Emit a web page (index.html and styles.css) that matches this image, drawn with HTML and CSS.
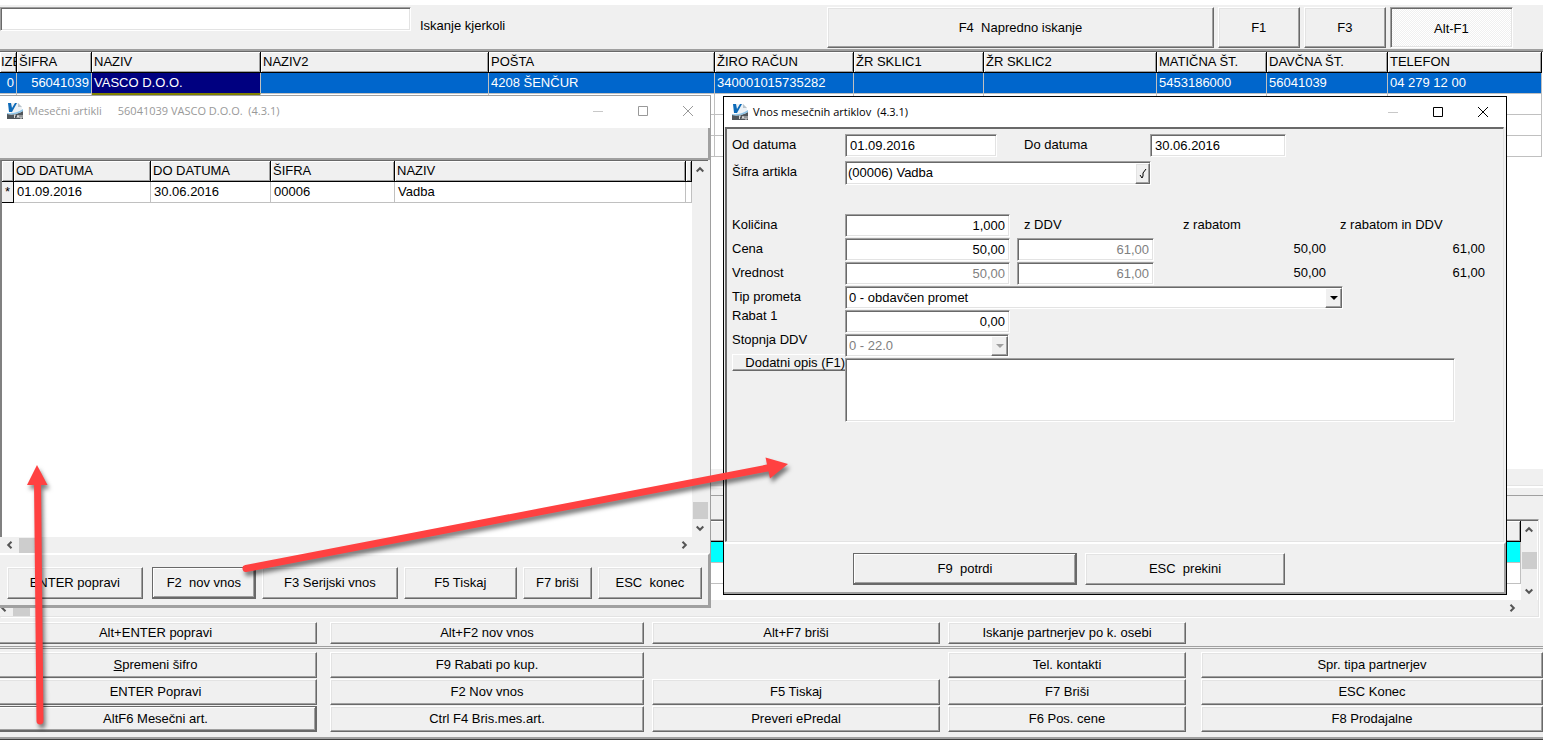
FILE: index.html
```
<!DOCTYPE html>
<html lang="sl">
  <head>
    <meta charset="UTF-8" />
    <meta name="viewport" content="width=device-width, initial-scale=1.0" />
    <title>Partnerji</title>
    <link rel="stylesheet" href="styles.css">
  </head>
  <body>
    <!-- shared icons -->
    <svg class="defs" width="0" height="0" aria-hidden="true">
      <symbol id="logo" viewBox="0 0 16 16">
        <path d="M4 0h7l4 4v8H4z" fill="#edf2f6" />
        <path d="M11 0l4 4h-4z" fill="#b9c3ca" />
        <path d="M0 11c6 1 11 0 16-3v8H0z" fill="#50565b" />
        <path d="M0 10c5 1 10 0 16-4v2c-5 3-10 4-16 3z" fill="#8cc3e6" />
        <path d="M1 0h3l1 5 3-5h2L5 9H2z" fill="#0d6ab8" />
        <path d="M7 12h2M7.500 12v3M10 15l1-3 1 3M13 12v3h2v-3" fill="none" stroke="#d8d8d8" />
      </symbol>
      <symbol id="min" viewBox="0 0 10 10"><path d="M0 5.500h10" fill="none" stroke="#c8c8c8" /></symbol>
      <symbol id="max" viewBox="0 0 10 10"><path d="M.5.5h9v9h-9z" fill="none" stroke="currentColor" /></symbol>
      <symbol id="close" viewBox="0 0 10 10"><path d="M0 0l10 10M10 0L0 10" fill="none" stroke="currentColor" /></symbol>
      <symbol id="up" viewBox="0 0 8 8"><path d="M.7 5.500L4 2.200l3.300 3.300" fill="none" stroke="#555" stroke-width="2" /></symbol>
      <symbol id="down" viewBox="0 0 8 8"><path d="M.7 2.500L4 5.800l3.300-3.300" fill="none" stroke="#555" stroke-width="2" /></symbol>
      <symbol id="left" viewBox="0 0 8 8"><path d="M5.500.7L2.200 4l3.300 3.300" fill="none" stroke="#555" stroke-width="2" /></symbol>
      <symbol id="right" viewBox="0 0 8 8"><path d="M2.500.7L5.800 4 2.500 7.300" fill="none" stroke="#555" stroke-width="2" /></symbol>
    </svg>

    <div class="toolbar">
      <input type="text" id="search" class="search" />
      <label for="search">Iskanje kjerkoli</label>
      <div class="toolbar-buttons">
        <button type="button" class="btn wide">F4  Napredno iskanje</button>
        <button type="button" class="btn">F1</button>
        <button type="button" class="btn">F3</button>
        <button type="button" class="btn pressed">Alt-F1</button>
      </div>
    </div>

    <div class="main-grid">
      <table class="grid partners">
        <colgroup>
          <col class="w-ize"><col class="w-sifra"><col class="w-naziv"><col class="w-naziv2"><col class="w-posta"><col class="w-racun"><col class="w-sklic1"><col class="w-sklic2"><col class="w-maticna"><col class="w-davcna"><col>
        </colgroup>
        <thead>
          <tr>
            <th class="cut">IZE</th>
            <th>ŠIFRA</th>
            <th>NAZIV</th>
            <th>NAZIV2</th>
            <th>POŠTA</th>
            <th>ŽIRO RAČUN</th>
            <th>ŽR SKLIC1</th>
            <th>ŽR SKLIC2</th>
            <th>MATIČNA ŠT.</th>
            <th>DAVČNA ŠT.</th>
            <th>TELEFON</th>
          </tr>
        </thead>
        <tbody>
          <tr class="selected">
            <td class="num">0</td>
            <td class="num">56041039</td>
            <td class="focused">VASCO D.O.O.</td>
            <td></td>
            <td>4208 ŠENČUR</td>
            <td>340001015735282</td>
            <td></td>
            <td></td>
            <td>5453186000</td>
            <td>56041039</td>
            <td>04 279 12 00</td>
          </tr>
          <tr><td></td><td></td><td></td><td></td><td></td><td></td><td></td><td></td><td></td><td></td><td></td></tr>
          <tr><td></td><td></td><td></td><td></td><td></td><td></td><td></td><td></td><td></td><td></td><td></td></tr>
          <tr><td></td><td></td><td></td><td></td><td></td><td></td><td></td><td></td><td></td><td></td><td></td></tr>
        </tbody>
      </table>
    </div>

    <div class="splitter"></div>

    <div class="sub-grid">
      <div class="sub-body">
        <table class="grid contacts">
          <thead><tr><th></th></tr></thead>
          <tbody>
            <tr class="cyan"><td></td></tr>
            <tr><td></td></tr>
          </tbody>
        </table>
        <div class="vscroll">
          <svg class="arrow"><use href="#up" /></svg>
          <div class="thumb near-top"></div>
          <svg class="arrow"><use href="#down" /></svg>
        </div>
      </div>
      <div class="hscroll">
        <svg class="arrow"><use href="#left" /></svg>
        <div class="thumb"></div>
        <svg class="arrow end"><use href="#right" /></svg>
      </div>
    </div>

    <div class="actions actions-top">
      <button type="button" class="btn">Alt+ENTER popravi</button>
      <button type="button" class="btn">Alt+F2 nov vnos</button>
      <button type="button" class="btn">Alt+F7 briši</button>
      <button type="button" class="btn">Iskanje partnerjev po k. osebi</button>
    </div>

    <div class="actions actions-bottom">
      <button type="button" class="btn"><u>S</u>premeni šifro</button>
      <button type="button" class="btn">F9 Rabati po kup.</button>
      <span></span>
      <button type="button" class="btn">Tel. kontakti</button>
      <button type="button" class="btn">Spr. tipa partnerjev</button>

      <button type="button" class="btn">ENTER Popravi</button>
      <button type="button" class="btn">F2 Nov vnos</button>
      <button type="button" class="btn">F5 Tiskaj</button>
      <button type="button" class="btn">F7 Briši</button>
      <button type="button" class="btn">ESC Konec</button>

      <button type="button" class="btn default">AltF6 Mesečni art.</button>
      <button type="button" class="btn">Ctrl F4 Bris.mes.art.</button>
      <button type="button" class="btn">Preveri ePredal</button>
      <button type="button" class="btn">F6 Pos. cene</button>
      <button type="button" class="btn">F8 Prodajalne</button>
    </div>

    <!-- window: list of monthly articles -->
    <div class="window list-window">
      <div class="titlebar inactive">
        <svg class="logo"><use href="#logo" /></svg>
        <span class="title">Mesečni artikli</span>
        <span class="title partner">56041039 VASCO D.O.O.  (4.3.1)</span>
        <div class="win-controls">
          <svg><use href="#min" /></svg>
          <svg><use href="#max" /></svg>
          <svg><use href="#close" /></svg>
        </div>
      </div>
      <div class="list-head"></div>
      <div class="list-body">
        <div class="list-table">
          <table class="grid articles">
            <colgroup>
              <col class="w-mark"><col class="w-od"><col class="w-do"><col class="w-art"><col class="w-artname"><col>
            </colgroup>
            <thead>
              <tr><th></th><th>OD DATUMA</th><th>DO DATUMA</th><th>ŠIFRA</th><th>NAZIV</th><th></th></tr>
            </thead>
            <tbody>
              <tr><td class="mark">*</td><td>01.09.2016</td><td>30.06.2016</td><td>00006</td><td>Vadba</td><td></td></tr>
            </tbody>
          </table>
        </div>
        <div class="vscroll">
          <svg class="arrow"><use href="#up" /></svg>
          <div class="thumb near-bottom"></div>
          <svg class="arrow"><use href="#down" /></svg>
        </div>
      </div>
      <div class="hscroll">
        <svg class="arrow"><use href="#left" /></svg>
        <div class="thumb"></div>
        <svg class="arrow end"><use href="#right" /></svg>
      </div>
      <div class="window-buttons list-buttons">
        <button type="button" class="btn">ENTER popravi</button>
        <button type="button" class="btn default">F2  nov vnos</button>
        <button type="button" class="btn">F3 Serijski vnos</button>
        <button type="button" class="btn">F5 Tiskaj</button>
        <button type="button" class="btn">F7 briši</button>
        <button type="button" class="btn">ESC  konec</button>
      </div>
    </div>

    <!-- window: article entry -->
    <form class="window entry-window">
      <div class="titlebar">
        <svg class="logo"><use href="#logo" /></svg>
        <span class="title">Vnos mesečnih artiklov  (4.3.1)</span>
        <div class="win-controls">
          <svg><use href="#min" /></svg>
          <svg><use href="#max" /></svg>
          <svg><use href="#close" /></svg>
        </div>
      </div>
      <div class="entry-form">
        <div class="row">
          <label for="od">Od datuma</label>
          <input type="text" id="od" class="date" value="01.09.2016" />
          <label for="do" class="mid">Do datuma</label>
          <input type="text" id="do" class="date-to" value="30.06.2016" />
        </div>
        <div class="row picker-row">
          <label for="artikel">Šifra artikla</label>
          <div class="picker">
            <input type="text" id="artikel" value="(00006) Vadba" />
            <button type="button" class="btn pick" aria-label="Izberi"><svg width="8" height="10" viewBox="0 0 8 10"><path d="M1 6l2 3 1-2V4l3-4" fill="none" stroke="#000" /></svg></button>
          </div>
        </div>
        <div class="row amounts">
          <label for="kolicina">Količina</label>
          <input type="text" id="kolicina" class="amount" value="1,000" />
          <span class="cap">z DDV</span>
          <span class="cap cap-rabat">z rabatom</span>
          <span class="cap">z rabatom in DDV</span>
        </div>
        <div class="row amounts">
          <label for="cena">Cena</label>
          <input type="text" id="cena" class="amount" value="50,00" />
          <input type="text" class="amount" value="61,00" aria-label="Cena z DDV" disabled />
          <output>50,00</output>
          <output>61,00</output>
        </div>
        <div class="row amounts">
          <label for="vrednost">Vrednost</label>
          <input type="text" id="vrednost" class="amount" value="50,00" disabled />
          <input type="text" class="amount" value="61,00" aria-label="Vrednost z DDV" disabled />
          <output>50,00</output>
          <output>61,00</output>
        </div>
        <div class="row">
          <label for="tip">Tip prometa</label>
          <div class="combo combo-wide">
            <select id="tip"><option>0 - obdavčen promet</option></select>
            <span class="drop"></span>
          </div>
        </div>
        <div class="row amounts compact">
          <label for="rabat">Rabat 1</label>
          <input type="text" id="rabat" class="amount" value="0,00" />
        </div>
        <div class="row compact">
          <label for="stopnja">Stopnja DDV</label>
          <div class="combo">
            <select id="stopnja" disabled><option>0 - 22.0</option></select>
            <span class="drop off"></span>
          </div>
        </div>
        <div class="row notes">
          <button type="button" class="btn note-btn">Dodatni opis (F1)</button>
          <textarea aria-label="Dodatni opis"></textarea>
        </div>
      </div>
      <div class="window-buttons entry-buttons">
        <button type="button" class="btn default confirm">F9  potrdi</button>
        <button type="button" class="btn cancel">ESC  prekini</button>
      </div>
    </form>

    <!-- red arrows over the windows -->
    <svg class="arrows" width="800" height="740" viewBox="0 0 800 740" aria-hidden="true">
      <g fill="#ff4141" stroke="#ff4141">
        <path d="M40 721L37.500 480" stroke-width="7" stroke-linecap="round" />
        <path d="M37 465L27 485h20.500z" stroke="none" />
      </g>
      <g fill="#ff4141" stroke="#ff4141">
        <path d="M246 568.500L770 467.500" stroke-width="7" stroke-linecap="round" />
        <path d="M788 464L765.500 457.500l4.500 21z" stroke="none" />
      </g>
    </svg>
  </body>
</html>
```
FILE: styles.css
```
* {
  box-sizing: border-box;
}
html {
  background: #fff;
}
body {
  position: relative;
  display: flex;
  flex-direction: column;
  min-height: 100vh;
  margin: 0;
  padding-top: 5px;
  overflow: hidden;
  background: #f0f0f0;
  background-clip: content-box;
  color: #000;
  border-bottom: 1px solid #404040;
}
body, input, button, select, textarea {
  font-family: "Liberation Sans", Arial, sans-serif;
  font-size: 13px;
  line-height: 16px;
}
.defs {
  position: absolute;
}

/* classic raised and sunken edges */
.btn {
  padding: 0;
  background: #f0f0f0;
  color: #000;
  border: 1px solid;
  border-color: #fff #696969 #696969 #fff;
  border-radius: 0;
  box-shadow: inset -1px -1px #a0a0a0, inset 1px 1px #e3e3e3;
  white-space: pre;
}
.btn.default {
  border: 1px solid #696969;
  box-shadow: inset -1px -1px #696969, inset 1px 1px #fff, inset -2px -2px #a0a0a0;
}
.btn.pressed {
  padding-top: 2px;
  background: repeating-conic-gradient(#fff 0 25%, #f0f0f0 0 50%) 0 0 / 2px 2px;
  border-color: #a0a0a0 #fff #fff #a0a0a0;
  box-shadow: inset 1px 1px #696969, inset -1px -1px #e3e3e3;
}
input, select, textarea {
  margin: 0;
  background: #fff;
  color: #000;
  border: 1px solid;
  border-color: #a0a0a0 #fff #fff #a0a0a0;
  border-radius: 0;
  box-shadow: inset 1px 1px #696969, inset -1px -1px #e3e3e3;
  outline: none;
}

/* toolbar */
.toolbar {
  display: flex;
  align-items: flex-start;
  height: 44px;
  padding-top: 2px;
}
.search {
  width: 411px;
  height: 24px;
  margin-right: 9px;
}
.toolbar label {
  padding-top: 11px;
}
.toolbar-buttons {
  display: grid;
  flex: 1;
  grid-template-columns: 386fr 82fr 82fr 123fr;
  gap: 4px;
  height: 41px;
  margin-left: 322px;
  margin-right: 30px;
}

/* data grids */
.grid {
  width: 100%;
  border-collapse: separate;
  border-spacing: 0;
  table-layout: fixed;
}
.grid th {
  height: 21px;
  padding: 0 2px;
  background: #f0f0f0;
  border-right: 1px solid #000;
  border-bottom: 1px solid #000;
  box-shadow: inset 1px 1px #fff, inset -1px -1px #a0a0a0;
  font-weight: normal;
  text-align: left;
  white-space: nowrap;
  overflow: hidden;
}
.grid td {
  height: 21px;
  padding: 0 2px;
  border-right: 1px solid #c0c0c0;
  border-bottom: 1px solid #c0c0c0;
  white-space: nowrap;
}
.grid th.cut {
  padding: 0 0 0 1px;
}
.grid .num {
  text-align: right;
}
.main-grid {
  flex: 1;
  padding-top: 1px;
  padding-right: 1px;
  background: #fff;
  border-top: 2px solid #a0a0a0;
  box-shadow: inset 0 1px #696969;
}
.selected td {
  background: #0066cc;
  color: #fff;
}
.selected td.focused {
  background: #000080;
  border-bottom: 1px solid #808000;
  box-shadow: 0 1px #808000;
}
.w-ize { width: 17px; }
.w-sifra { width: 75px; }
.w-naziv { width: 169px; }
.w-naziv2 { width: 228px; }
.w-posta { width: 226px; }
.w-racun { width: 139px; }
.w-sklic1 { width: 130px; }
.w-sklic2 { width: 173px; }
.w-maticna { width: 110px; }
.w-davcna { width: 121px; }

.splitter {
  height: 27px;
  margin-top: 16px;
  border-top: 1px solid #e3e3e3;
  border-bottom: 1px solid #f0f0f0;
  background: linear-gradient(#fff 0 2px, #f0f0f0 2px 9px, #a0a0a0 9px 10px, #f0f0f0 10px);
}
.sub-grid {
  margin: 7px 4px 0 0;
  padding-top: 1px;
  border-top: 1px solid #a0a0a0;
  border-right: 1px solid #e3e3e3;
  border-bottom: 1px solid #e3e3e3;
  box-shadow: inset 0 1px #696969, 1px 1px #fff;
}
.sub-body {
  display: flex;
  height: 79px;
  padding-right: 1px;
  background: #fff;
}
.contacts {
  align-self: flex-start;
}
.cyan td {
  background: #00ffff;
}

/* scrollbars */
.vscroll {
  display: flex;
  flex: none;
  flex-direction: column;
  align-items: center;
  width: 16px;
  padding: 5px 0;
  background: #f0f0f0;
}
.vscroll .thumb {
  width: 15px;
  height: 17px;
  background: #cdcdcd;
}
.near-top {
  margin-top: 18px;
  margin-bottom: auto;
}
.near-bottom {
  margin-top: auto;
  margin-bottom: 5px;
}
.hscroll {
  display: flex;
  align-items: center;
  height: 16px;
  background: #f0f0f0;
}
.hscroll .thumb {
  width: 17px;
  height: 15px;
  margin-left: 5px;
  background: #cdcdcd;
}
.arrow {
  flex: none;
  width: 8px;
  height: 8px;
}
.arrow.end {
  margin-left: auto;
  margin-right: 22px;
}

/* bottom buttons */
.actions {
  display: grid;
  grid-template-columns: 336fr 322fr 296fr 253fr 342fr;
  margin-left: -6px;
}
.actions .btn {
  margin-right: 8px;
}
.actions .btn:nth-child(5n + 1) {
  margin-right: 13px;
}
.actions .btn:nth-child(5n + 4) {
  margin-right: 15px;
}
.actions .btn:nth-child(5n) {
  margin-right: 0;
}
.actions-top {
  grid-auto-rows: 22px;
  padding: 5px 0 2px;
}
.actions-bottom {
  grid-auto-rows: 26px;
  row-gap: 1px;
  padding: 5px 0;
  border-top: 1px solid #a0a0a0;
  border-bottom: 2px solid #a0a0a0;
  box-shadow: inset 0 1px #f0f0f0, inset 0 2px #a0a0a0;
}

/* windows */
.window {
  position: absolute;
  display: flex;
  flex-direction: column;
  background: #f0f0f0;
}
.titlebar {
  display: flex;
  align-items: center;
  height: 30px;
  padding: 0 18px 0 8px;
  background: #fff;
  font-family: "Open Sans", "Noto Sans", sans-serif;
  font-size: 11px;
}
.titlebar.inactive {
  color: #999;
}
.logo {
  width: 16px;
  height: 16px;
  margin-right: 5px;
}
.title {
  white-space: pre;
}
.partner {
  margin-left: 16px;
}
.win-controls {
  display: flex;
  gap: 35px;
  margin-left: auto;
}
.win-controls svg {
  width: 10px;
  height: 10px;
}
.window-buttons {
  display: flex;
  background: #f0f0f0;
  border-top: 2px solid #fff;
  border-right: 2px solid #a0a0a0;
  border-bottom: 2px solid #a0a0a0;
}

.list-window {
  left: 0;
  top: 95px;
  width: 711px;
  height: 513px;
  border-top: 1px solid #a0a0a0;
  border-right: 1px solid #a0a0a0;
  border-bottom: 1px solid #a0a0a0;
}
.list-window .titlebar {
  height: 32px;
  padding: 0 17px 3px 7px;
}
.list-head {
  height: 32px;
  border-right: 2px solid #a0a0a0;
  border-bottom: 2px solid #a0a0a0;
}
.list-body {
  display: flex;
  flex: 1;
  margin-right: 2px;
  background: #fff;
  border-top: 1px solid #696969;
  border-left: 2px solid #808080;
}
.list-table {
  flex: 1;
}
.w-mark { width: 12px; }
.w-od { width: 137px; }
.w-do { width: 120px; }
.w-art { width: 124px; }
.w-artname { width: 291px; }
.articles td {
  padding-left: 3px;
}
.articles td.mark {
  padding: 0;
  background: #f0f0f0;
  border-right: 1px solid #000;
  border-bottom: 1px solid #000;
  text-align: center;
}
.list-window .hscroll {
  padding-left: 6px;
}
.list-buttons {
  height: 54px;
  padding: 12px 6px 6px 7px;
  gap: 6px;
}
.list-buttons .btn {
  flex: 113 1 0;
  height: 32px;
}
.list-buttons .btn:nth-child(1),
.list-buttons .btn:nth-child(3) {
  flex-grow: 136;
}
.list-buttons .btn:nth-child(2),
.list-buttons .btn:nth-child(6) {
  flex-grow: 104;
}
.list-buttons .btn:nth-child(5) {
  flex-grow: 68;
}
.list-buttons .default {
  margin-left: 3px;
}

.entry-window {
  left: 723px;
  top: 96px;
  width: 784px;
  height: 499px;
  border: 1px solid #000;
}
.entry-form {
  flex: 1;
  margin: 0 2px 0 1px;
  padding: 5px 0 0 5px;
  border-top: 2px solid #696969;
  border-left: 2px solid #696969;
  border-right: 1px solid #e3e3e3;
  border-bottom: 1px solid #e3e3e3;
}
.row {
  display: flex;
  align-items: flex-start;
  height: 24px;
}
.row label {
  flex: none;
  width: 113px;
  line-height: 21px;
}
.row input {
  height: 23px;
  padding: 0 4px;
}
.row label.mid {
  width: 126px;
  margin-left: 27px;
}
.date {
  width: 152px;
}
.date-to {
  width: 136px;
}
.picker-row {
  height: 26px;
  margin: 3px 0 27px;
}
.picker {
  position: relative;
}
.row .picker input {
  width: 306px;
  height: 24px;
  padding: 0 2px 2px;
}
.pick {
  position: absolute;
  top: 2px;
  right: 1px;
  display: flex;
  align-items: center;
  justify-content: center;
  width: 15px;
  height: 21px;
}
.amounts {
  display: grid;
  grid-template-columns: 106px 165px 137px 165px 152px;
  column-gap: 7px;
}
.amounts label {
  width: auto;
}
.amounts .amount {
  width: 100%;
  text-align: right;
}
.cap, output {
  line-height: 21px;
  padding-left: 7px;
}
.cap-rabat {
  padding-left: 22px;
}
output {
  text-align: right;
}
input:disabled, select:disabled {
  background: #fff;
  color: #808080;
  opacity: 1;
}
.compact label {
  line-height: 12px;
}
.combo {
  position: relative;
  width: 164px;
}
.combo-wide {
  width: 498px;
}
.combo select {
  width: 100%;
  height: 23px;
  padding: 0 3px;
  appearance: none;
}
.drop {
  position: absolute;
  top: 2px;
  right: 1px;
  display: flex;
  align-items: center;
  justify-content: center;
  width: 17px;
  height: 20px;
  background: #f0f0f0;
  border: 1px solid;
  border-color: #fff #696969 #696969 #fff;
  box-shadow: inset -1px -1px #a0a0a0;
  pointer-events: none;
}
.drop::after {
  content: "";
  border: 4px solid transparent;
  border-top-color: #000;
  border-bottom: 0;
}
.drop.off::after {
  border-top-color: #a0a0a0;
}
.row.notes {
  height: 64px;
}
.note-btn {
  flex: none;
  width: 113px;
  height: 17px;
  margin-top: -4px;
  border-right: 0;
  line-height: 14px;
  text-align: right;
  box-shadow: inset 0 -1px #a0a0a0;
}
textarea {
  width: 610px;
  height: 64px;
  resize: none;
}
.entry-buttons {
  gap: 8px;
  height: 52px;
  padding: 9px 0 0 129px;
}
.entry-buttons .btn {
  height: 32px;
}
.confirm {
  width: 224px;
}
.cancel {
  width: 200px;
}

.arrows {
  position: absolute;
  left: 0;
  top: 0;
  pointer-events: none;
}
.arrows g {
  filter: drop-shadow(2px 4px 2px rgba(0, 0, 0, 0.5));
}
```
